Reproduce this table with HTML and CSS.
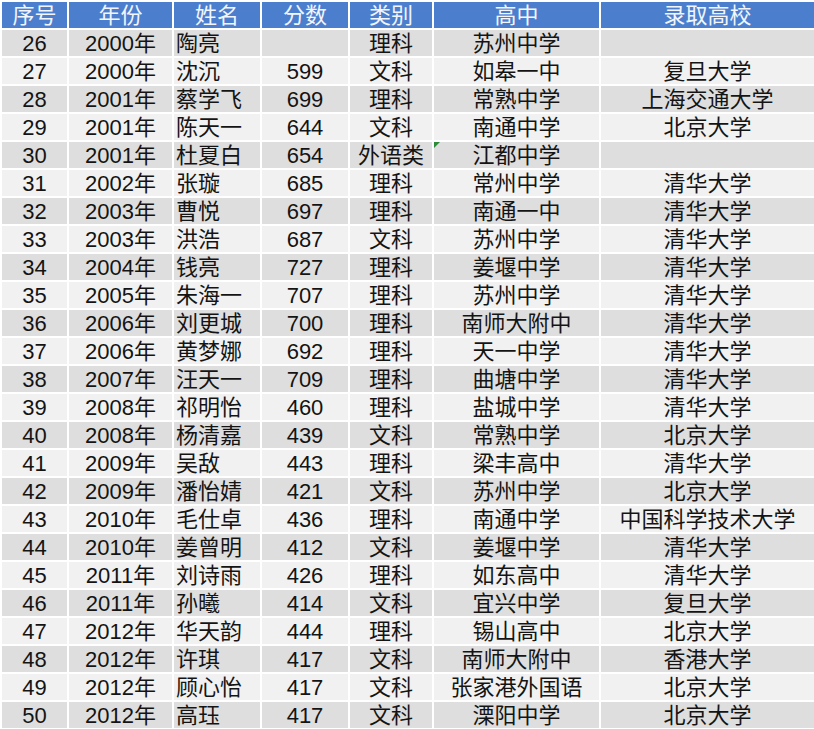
FILE: index.html
```html
<!DOCTYPE html>
<html lang="zh">
<head>
<meta charset="utf-8">
<title>录取名单</title>
<link rel="stylesheet" href="styles.css">
</head>
<body>
<table class="sheet">
<colgroup>
<col class="c1"><col class="c2"><col class="c3"><col class="c4"><col class="c5"><col class="c6"><col class="c7">
</colgroup>
<thead>
<tr><th>序号</th><th>年份</th><th>姓名</th><th>分数</th><th>类别</th><th>高中</th><th>录取高校</th></tr>
</thead>
<tbody>
<tr><td>26</td><td>2000年</td><td class="name">陶亮</td><td></td><td>理科</td><td>苏州中学</td><td></td></tr>
<tr><td>27</td><td>2000年</td><td class="name">沈沉</td><td>599</td><td>文科</td><td>如皋一中</td><td>复旦大学</td></tr>
<tr><td>28</td><td>2001年</td><td class="name">蔡学飞</td><td>699</td><td>理科</td><td>常熟中学</td><td>上海交通大学</td></tr>
<tr><td>29</td><td>2001年</td><td class="name">陈天一</td><td>644</td><td>文科</td><td>南通中学</td><td>北京大学</td></tr>
<tr><td>30</td><td>2001年</td><td class="name">杜夏白</td><td>654</td><td>外语类</td><td class="flag">江都中学</td><td></td></tr>
<tr><td>31</td><td>2002年</td><td class="name">张璇</td><td>685</td><td>理科</td><td>常州中学</td><td>清华大学</td></tr>
<tr><td>32</td><td>2003年</td><td class="name">曹悦</td><td>697</td><td>理科</td><td>南通一中</td><td>清华大学</td></tr>
<tr><td>33</td><td>2003年</td><td class="name">洪浩</td><td>687</td><td>文科</td><td>苏州中学</td><td>清华大学</td></tr>
<tr><td>34</td><td>2004年</td><td class="name">钱亮</td><td>727</td><td>理科</td><td>姜堰中学</td><td>清华大学</td></tr>
<tr><td>35</td><td>2005年</td><td class="name">朱海一</td><td>707</td><td>理科</td><td>苏州中学</td><td>清华大学</td></tr>
<tr><td>36</td><td>2006年</td><td class="name">刘更城</td><td>700</td><td>理科</td><td>南师大附中</td><td>清华大学</td></tr>
<tr><td>37</td><td>2006年</td><td class="name">黄梦娜</td><td>692</td><td>理科</td><td>天一中学</td><td>清华大学</td></tr>
<tr><td>38</td><td>2007年</td><td class="name">汪天一</td><td>709</td><td>理科</td><td>曲塘中学</td><td>清华大学</td></tr>
<tr><td>39</td><td>2008年</td><td class="name">祁明怡</td><td>460</td><td>理科</td><td>盐城中学</td><td>清华大学</td></tr>
<tr><td>40</td><td>2008年</td><td class="name">杨清嘉</td><td>439</td><td>文科</td><td>常熟中学</td><td>北京大学</td></tr>
<tr><td>41</td><td>2009年</td><td class="name">吴敌</td><td>443</td><td>理科</td><td>梁丰高中</td><td>清华大学</td></tr>
<tr><td>42</td><td>2009年</td><td class="name">潘怡婧</td><td>421</td><td>文科</td><td>苏州中学</td><td>北京大学</td></tr>
<tr><td>43</td><td>2010年</td><td class="name">毛仕卓</td><td>436</td><td>理科</td><td>南通中学</td><td>中国科学技术大学</td></tr>
<tr><td>44</td><td>2010年</td><td class="name">姜曾明</td><td>412</td><td>文科</td><td>姜堰中学</td><td>清华大学</td></tr>
<tr><td>45</td><td>2011年</td><td class="name">刘诗雨</td><td>426</td><td>理科</td><td>如东高中</td><td>清华大学</td></tr>
<tr><td>46</td><td>2011年</td><td class="name">孙曦</td><td>414</td><td>文科</td><td>宜兴中学</td><td>复旦大学</td></tr>
<tr><td>47</td><td>2012年</td><td class="name">华天韵</td><td>444</td><td>理科</td><td>锡山高中</td><td>北京大学</td></tr>
<tr><td>48</td><td>2012年</td><td class="name">许琪</td><td>417</td><td>文科</td><td>南师大附中</td><td>香港大学</td></tr>
<tr><td>49</td><td>2012年</td><td class="name">顾心怡</td><td>417</td><td>文科</td><td>张家港外国语</td><td>北京大学</td></tr>
<tr><td>50</td><td>2012年</td><td class="name">高珏</td><td>417</td><td>文科</td><td>溧阳中学</td><td>北京大学</td></tr>
</tbody>
</table>
</body>
</html>
```
FILE: styles.css
```css
html, body {
  margin: 0;
  padding: 0;
  background: #ffffff;
}
.sheet {
  width: 814px;
  table-layout: fixed;
  border-collapse: collapse;
  font-family: "Liberation Sans", "Noto Sans CJK SC", sans-serif;
  font-size: 22px;
  color: #141414;
}
.c1 { width: 67px; }
.c2 { width: 105px; }
.c3 { width: 88px; }
.c4 { width: 88px; }
.c5 { width: 84px; }
.c6 { width: 167px; }
.c7 { width: 215px; }
.sheet th,
.sheet td {
  height: 24px;
  padding: 2px 0 0;
  border: 2px solid #ffffff;
  text-align: center;
  vertical-align: middle;
  white-space: nowrap;
  overflow: hidden;
  line-height: 24px;
}
.sheet th {
  background: #4b7fce;
  color: #f2f5fb;
  font-weight: normal;
}
.sheet tbody tr:nth-child(odd) td {
  background: #dedede;
}
.sheet tbody tr:nth-child(even) td {
  background: #f1f1f1;
}
.sheet td.name {
  text-align: left;
  padding-left: 2px;
}
.sheet td.flag {
  position: relative;
}
.sheet td.flag::before {
  content: "";
  position: absolute;
  left: 0;
  top: 0;
  border-top: 6px solid #2e8b3a;
  border-right: 6px solid transparent;
}
```
